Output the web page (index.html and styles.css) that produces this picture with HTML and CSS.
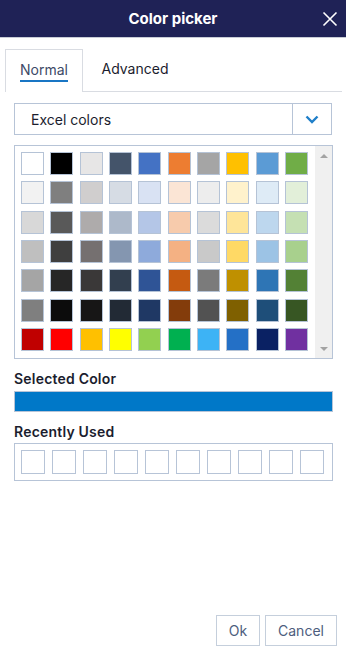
FILE: index.html
```html
<!DOCTYPE html>
<html lang="en">
<head>
    <meta charset="UTF-8">
    <meta name="viewport" content="width=device-width, initial-scale=1.0">
    <title>Color picker</title>
    <link rel="stylesheet" href="styles.css">
</head>
<body>
    <div class="dialog">
        <div class="dialog-header">
            <h1>Color picker</h1>
            <button class="close-btn" aria-label="Close">
                <svg width="16" height="16" viewBox="0 0 16 16"><path d="M1.5 1.5L14.5 14.5M14.5 1.5L1.5 14.5" stroke="#fff" stroke-width="1.6" fill="none"/></svg>
            </button>
        </div>

        <div class="dialog-body">
            <div class="tabs">
                <div class="tab active"><span>Normal</span></div>
                <div class="tab"><span>Advanced</span></div>
                <div class="tab-rest"></div>
            </div>

            <div class="select">
                <div class="select-value">Excel colors</div>
                <div class="select-arrow">
                    <svg width="14" height="9" viewBox="0 0 14 9"><path d="M1.5 1.5L7 7L12.5 1.5" stroke="#1f7fc9" stroke-width="2.4" fill="none"/></svg>
                </div>
            </div>

            <div class="palette">
                <div class="swatches" id="swatches"></div>
                <div class="scrollbar">
                    <span class="arrow-up"></span>
                    <span class="arrow-down"></span>
                </div>
            </div>

            <div class="label">Selected Color</div>
            <div class="selected-color"></div>

            <div class="label">Recently Used</div>
            <div class="recent">
                <div class="recent-item"></div>
                <div class="recent-item"></div>
                <div class="recent-item"></div>
                <div class="recent-item"></div>
                <div class="recent-item"></div>
                <div class="recent-item"></div>
                <div class="recent-item"></div>
                <div class="recent-item"></div>
                <div class="recent-item"></div>
                <div class="recent-item"></div>
            </div>
        </div>

        <div class="dialog-footer">
            <button class="btn btn-ok">Ok</button>
            <button class="btn">Cancel</button>
        </div>
    </div>

    <script>
        const colors = [
            '#FFFFFF', '#000000', '#E7E6E6', '#44546A', '#4472C4', '#ED7D31', '#A5A5A5', '#FFC000', '#5B9BD5', '#70AD47',
            '#F2F2F2', '#7F7F7F', '#D0CECE', '#D6DCE4', '#D9E2F3', '#FBE5D5', '#EDEDED', '#FFF2CC', '#DEEBF6', '#E2EFD9',
            '#D8D8D8', '#595959', '#AEABAB', '#ADB9CA', '#B4C6E7', '#F7CBAC', '#DBDBDB', '#FEE599', '#BDD7EE', '#C5E0B3',
            '#BFBFBF', '#3F3F3F', '#757070', '#8496B0', '#8EAADB', '#F4B183', '#C9C9C9', '#FFD965', '#9CC3E5', '#A8D08D',
            '#A5A5A5', '#262626', '#3A3838', '#323F4F', '#2F5496', '#C55A11', '#7B7B7B', '#BF9000', '#2E75B5', '#538135',
            '#7F7F7F', '#0C0C0C', '#171616', '#222A35', '#1F3864', '#833C0B', '#525252', '#7F6000', '#1E4E79', '#375623',
            '#C00000', '#FF0000', '#FFC000', '#FFFF00', '#92D050', '#00B050', '#3DB3F5', '#2470C6', '#0A2163', '#7030A0'
        ];

        const swatches = document.getElementById('swatches');
        colors.forEach(color => {
            const swatch = document.createElement('div');
            swatch.className = 'swatch';
            swatch.style.backgroundColor = color;
            swatches.appendChild(swatch);
        });
    </script>
</body>
</html>
```

FILE: styles.css
```css
* {
    margin: 0;
    padding: 0;
    box-sizing: border-box;
}

body {
    font-family: Inter, 'Noto Sans', sans-serif;
    background-color: white;
    color: #1b1d2e;
}

.dialog {
    display: flex;
    flex-direction: column;
    min-height: 100vh;
}

.dialog-header {
    height: 38px;
    background-color: #1f2256;
    border-bottom: 1px solid #c8ccd6;
    display: flex;
    align-items: center;
    justify-content: center;
    position: relative;
}

.dialog-header h1 {
    color: white;
    font-size: 15px;
    font-weight: 700;
}

.close-btn {
    position: absolute;
    right: 8px;
    top: 11px;
    background: none;
    border: none;
    width: 16px;
    height: 16px;
    cursor: pointer;
}

.dialog-body {
    padding: 11px 4px 0 5px;
}

.tabs {
    display: flex;
    height: 43px;
}

.tab {
    display: flex;
    align-items: center;
    justify-content: center;
    font-size: 14px;
    color: #1b1d2e;
    border-bottom: 1px solid #d9dce2;
    padding-top: 1px;
}

.tab span {
    display: inline-block;
    padding-bottom: 2px;
    border-bottom: 2px solid transparent;
    line-height: 16px;
}

.tab.active {
    width: 78px;
    border: 1px solid #d9dce2;
    border-bottom: none;
}

.tab.active span {
    color: #3d4a66;
    border-bottom-color: #1976c4;
}

.tab:nth-child(2) {
    width: 104px;
}

.tab-rest {
    flex: 1;
    border-bottom: 1px solid #d9dce2;
}

.select {
    display: flex;
    height: 32px;
    margin: 11px 10px 0 9px;
    border: 1px solid #b7c4d7;
}

.select-value {
    flex: 1;
    font-size: 14px;
    padding-left: 16px;
    display: flex;
    align-items: center;
    color: #1b1d2e;
}

.select-arrow {
    width: 39px;
    border-left: 1px solid #b7c4d7;
    display: flex;
    align-items: center;
    justify-content: center;
    padding-top: 1px;
}

.palette {
    display: flex;
    margin: 10px 9px 0 9px;
    border: 1px solid #b7c4d7;
    height: 214px;
}

.swatches {
    flex: 1;
    display: grid;
    grid-template-columns: repeat(10, 23px);
    grid-auto-rows: 23px;
    column-gap: 6.33px;
    row-gap: 6.33px;
    padding: 6px 0 0 6px;
}

.swatch {
    border: 1px solid #b5c3d6;
}

.scrollbar {
    width: 17px;
    background-color: #f0f0f0;
    display: flex;
    flex-direction: column;
    justify-content: space-between;
    align-items: center;
    padding: 8px 0 7px;
}

.arrow-up,
.arrow-down {
    width: 0;
    height: 0;
    border-left: 4px solid transparent;
    border-right: 4px solid transparent;
}

.arrow-up {
    border-bottom: 4px solid #a3a3a3;
}

.arrow-down {
    border-top: 4px solid #a3a3a3;
}

.label {
    font-size: 14px;
    font-weight: 600;
    margin: 11px 9px 0 9px;
    letter-spacing: 0.2px;
    line-height: 17px;
}

.selected-color {
    height: 21px;
    margin: 4px 9px 0 9px;
    background-color: #0078c8;
    border: 1px solid #b7c4d7;
}

.recent {
    display: flex;
    gap: 7px;
    margin: 3px 9px 0 9px;
    padding: 6px 6px;
    border: 1px solid #b7c4d7;
}

.recent-item {
    width: 24px;
    height: 24px;
    border: 1px solid #b7c4d7;
}

.dialog-footer {
    margin-top: auto;
    display: flex;
    justify-content: flex-end;
    gap: 5px;
    padding: 0 9px 10px 0;
}

.btn {
    height: 31px;
    background: white;
    border: 1px solid #c5cfdc;
    font-family: Inter, 'Noto Sans', sans-serif;
    font-size: 14px;
    color: #4d5d7d;
    cursor: pointer;
}

.btn-ok {
    width: 44px;
}

.btn:last-child {
    width: 72px;
}
```
